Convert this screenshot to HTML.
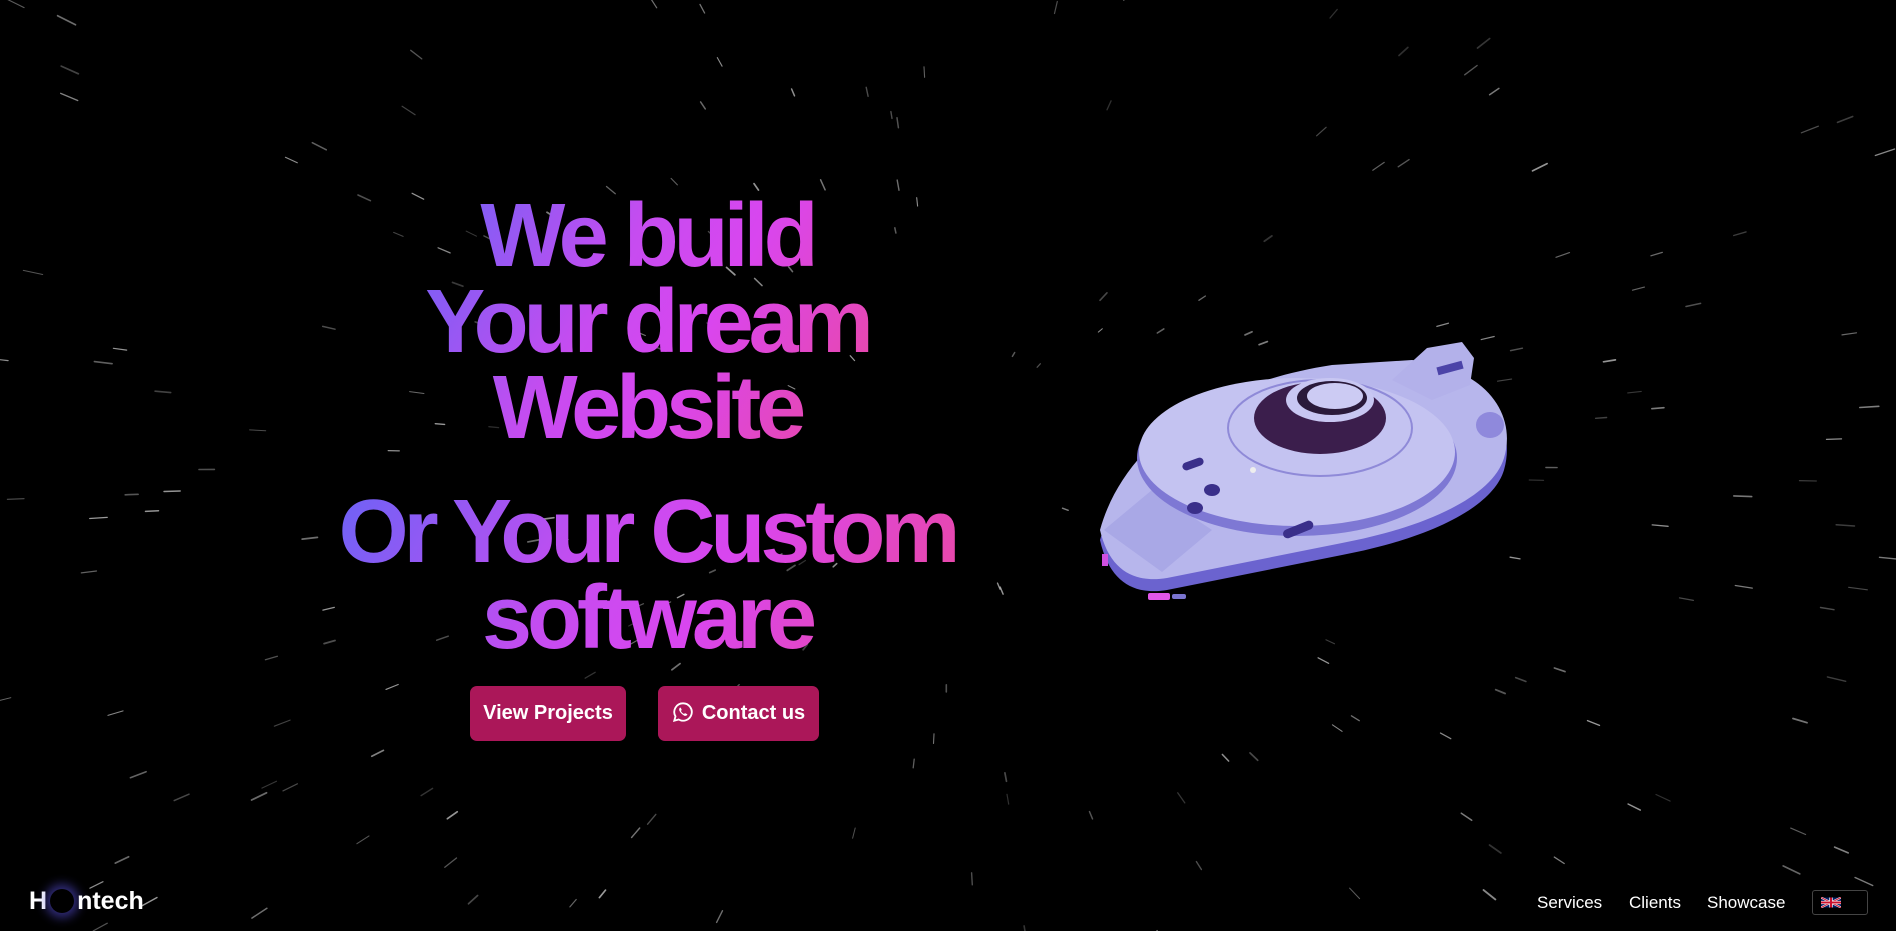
<!DOCTYPE html>
<html><head><meta charset="utf-8"><style>
html,body{margin:0;padding:0;background:#000;width:1896px;height:931px;overflow:hidden;font-family:"Liberation Sans",sans-serif}
#stars{position:absolute;left:0;top:0}
.blk{position:absolute;left:0;width:1294px;text-align:center;font-weight:700;font-size:90px;line-height:86px;letter-spacing:-5px}
.blk span{display:inline-block;background:linear-gradient(120deg,#6a63f6 0%,#c64cf0 40%,#d946ef 60%,#ec4899 100%);-webkit-background-clip:text;background-clip:text;color:transparent;padding:0 10px}
.btn{position:absolute;top:686px;height:55px;background:#ab1759;border-radius:7px;color:#fff;font-weight:700;font-size:20px;line-height:55px;text-align:center}
.nav{position:absolute;top:893px;color:#fff;font-size:17px}
</style></head><body>
<svg id="stars" width="1896" height="931"></svg>
<div class="blk" style="top:193px"><span>We build<br>Your dream<br>Website</span></div>
<div class="blk" style="top:489px"><span>Or Your Custom<br>software</span></div>
<div class="btn" style="left:470px;width:156px">View Projects</div>
<div class="btn" style="left:658px;width:161px"><svg width="22" height="22" viewBox="0 0 24 24" style="vertical-align:-4px;margin-right:8px"><path d="M12 2.5a9.5 9.5 0 0 0-8.2 14.3L2.5 21.5l4.8-1.3A9.5 9.5 0 1 0 12 2.5z" fill="none" stroke="#fff" stroke-width="2"/><path d="M8.6 7.4c.3-.3.8-.3 1 .1l.9 1.9c.1.3 0 .6-.2.8l-.6.6c.7 1.5 1.9 2.7 3.4 3.4l.6-.6c.2-.2.5-.3.8-.2l1.900.9c.4.2.4.7.1 1-.8.9-2 1.2-3.2.6-2.300-1.1-4.100-2.9-5.2-5.2-.5-1.2-.3-2.4.5-3.3z" fill="#fff"/></svg>Contact us</div>
<svg style="position:absolute;left:1092px;top:340px" width="430" height="270" viewBox="0 0 430 270">
<path d="M8,200 C30,120 110,55 240,35 L320,30 C395,38 425,85 412,130 C400,170 330,200 250,215 L75,250 C45,255 18,245 8,200Z" fill="#6b63cf"/>
<path d="M8,190 C30,110 110,45 240,25 L320,20 C395,28 425,75 412,118 C400,158 330,188 250,203 L75,238 C45,243 18,233 8,190Z" fill="#b7b6ec"/>
<path d="M12,190 L60,150 L120,190 L70,232Z" fill="#a9a8e6"/>
<path d="M300,40 L335,8 L370,2 L382,18 L378,45 L340,60Z" fill="#b3b1ea"/>
<rect x="345" y="24" width="26" height="8" fill="#4c44a8" transform="rotate(-15 358 28)"/>
<ellipse cx="398" cy="85" rx="14" ry="13" fill="#8f89dc"/>
<ellipse cx="205" cy="118" rx="160" ry="78" fill="#7e78d4"/>
<ellipse cx="205" cy="112" rx="158" ry="74" fill="#c4c3f1"/>
<ellipse cx="228" cy="88" rx="92" ry="48" fill="none" stroke="#8f8ad8" stroke-width="2"/>
<ellipse cx="228" cy="78" rx="66" ry="36" fill="#3b1e4c"/>
<ellipse cx="238" cy="60" rx="44" ry="22" fill="#c8c7f2"/>
<ellipse cx="240" cy="58" rx="35" ry="17" fill="#2a1a3a"/>
<ellipse cx="243" cy="56" rx="28" ry="13" fill="#cccbf3"/>
<rect x="90" y="120" width="22" height="8" rx="4" fill="#3a2f8a" transform="rotate(-20 101 124)"/>
<ellipse cx="120" cy="150" rx="8" ry="6" fill="#3a2f8a"/>
<ellipse cx="103" cy="168" rx="8" ry="6" fill="#3a2f8a"/>
<rect x="190" y="185" width="32" height="9" rx="4.5" fill="#3a2f8a" transform="rotate(-22 206 189)"/>
<circle cx="161" cy="130" r="3" fill="#eee"/>
<rect x="56" y="253" width="22" height="7" rx="2" fill="#e057e8"/>
<rect x="80" y="254" width="14" height="5" rx="2" fill="#7a74cf"/>
<rect x="10" y="214" width="6" height="12" fill="#d04fe0"/>
</svg>
<div style="position:absolute;left:29px;top:887px;color:#fff;font-weight:700;font-size:25px">H<span style="display:inline-block;width:24px;height:24px;border-radius:50%;background:#000;box-shadow:0 0 10px 5px rgba(90,80,220,.55);vertical-align:-4px;margin:0 3px"></span>ntech</div>
<div class="nav" style="left:1537px">Services</div>
<div class="nav" style="left:1629px">Clients</div>
<div class="nav" style="left:1707px">Showcase</div>
<div style="position:absolute;left:1812px;top:890px;width:56px;height:25px;border:1px solid #444;border-radius:3px;box-sizing:border-box">
<svg width="20" height="11" viewBox="0 0 60 30" style="position:absolute;left:8px;top:6px"><rect width="60" height="30" fill="#012169"/><path d="M0,0 L60,30 M60,0 L0,30" stroke="#fff" stroke-width="6"/><path d="M0,0 L60,30 M60,0 L0,30" stroke="#C8102E" stroke-width="3"/><path d="M30,0 V30 M0,15 H60" stroke="#fff" stroke-width="10"/><path d="M30,0 V30 M0,15 H60" stroke="#C8102E" stroke-width="6"/></svg></div>
<script>
(function(){var s=12345;function r(){s=(s*16807)%2147483647;return s/2147483647;}
var cx=948,cy=465,out='';for(var i=0;i<480;i++){var a=r()*Math.PI*2,d=120+Math.pow(r(),0.6)*1100;var x=cx+Math.cos(a)*d,y=cy+Math.sin(a)*d*0.8;if(x<0||x>1896||y<0||y>931)continue;var L=3+d*0.012+r()*6;var x2=x+Math.cos(a)*L,y2=y+Math.sin(a)*L*0.8;var o=(0.2+r()*0.5).toFixed(2);out+='<line x1="'+x.toFixed(1)+'" y1="'+y.toFixed(1)+'" x2="'+x2.toFixed(1)+'" y2="'+y2.toFixed(1)+'" stroke="rgba(220,220,220,'+o+')" stroke-width="'+(1+r()*0.8).toFixed(1)+'" stroke-linecap="round"/>';}
document.getElementById('stars').innerHTML=out;})();
</script>
</body></html>
